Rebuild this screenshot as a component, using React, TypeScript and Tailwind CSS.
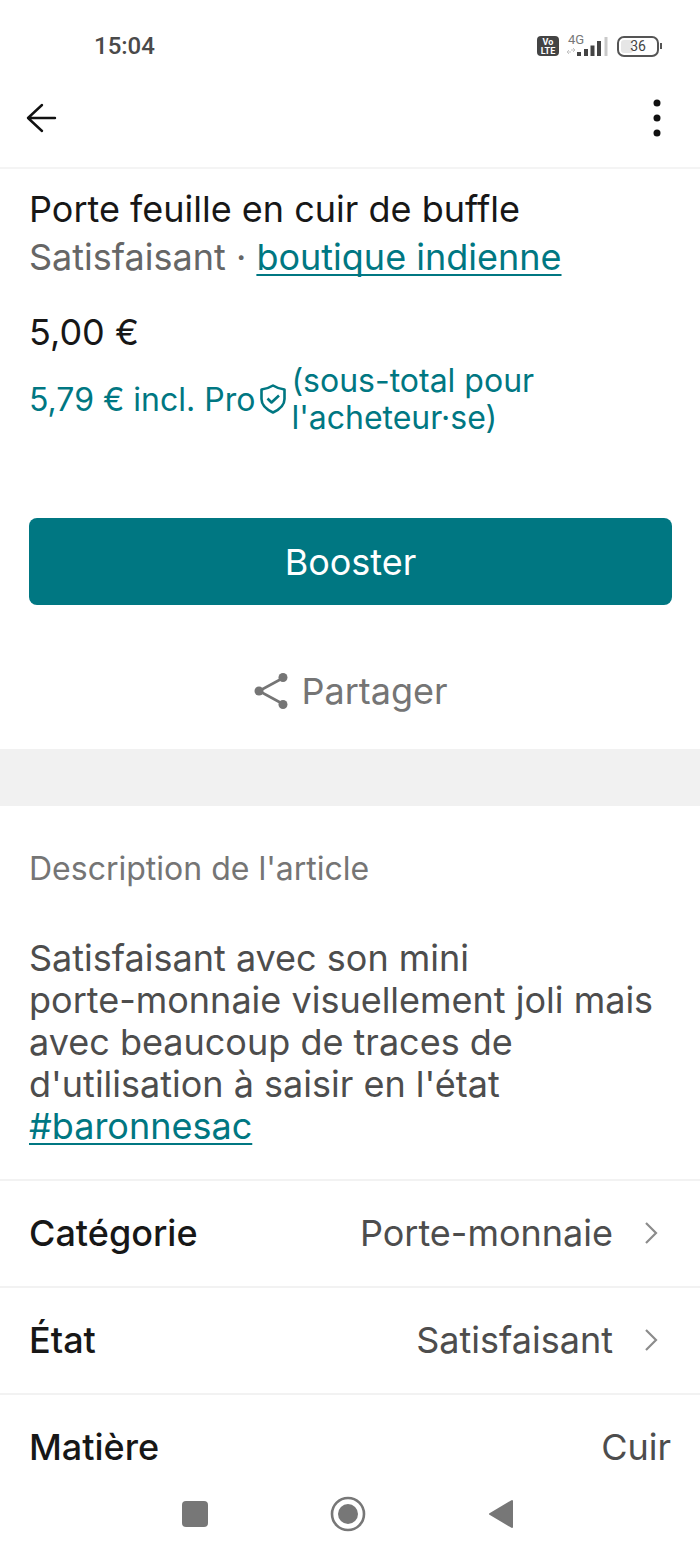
import type { ReactNode } from 'react'

type Detail = { label: string; value: string; href?: string }

const details: Detail[] = [
  { label: 'Catégorie', value: 'Porte-monnaie', href: '#categorie' },
  { label: 'État', value: 'Satisfaisant', href: '#etat' },
  { label: 'Matière', value: 'Cuir' },
]

function StatusBar() {
  return (
    <div className="flex h-[68px] items-center justify-between pt-6 pr-9 pl-[94px] text-[#4a4a4a]">
      <span className="font-[Roboto,sans-serif] text-2xl font-medium">15:04</span>
      <svg width="128" height="32" viewBox="0 0 128 32" fill="none" aria-hidden="true">
        {/* VoLTE badge */}
        <rect x="1" y="6" width="22" height="20" rx="4" fill="#444" />
        <text x="12" y="15" fontSize="9" fontWeight="700" fill="#fff" textAnchor="middle" fontFamily="Roboto, sans-serif">Vo</text>
        <text x="12" y="24" fontSize="9" fontWeight="700" fill="#fff" textAnchor="middle" fontFamily="Roboto, sans-serif">LTE</text>
        {/* signal */}
        <text x="32" y="14" fontSize="13" fill="#777" fontFamily="Roboto, sans-serif">4G</text>
        <path d="M31 22h4M33 20l-2 2 2 2M35 20h4M37 18l2 2-2 2" stroke="#c4c4c4" />
        <path d="M43 26v-4M50 26v-7M56.500 26V15.500M63 26V11" stroke="#444" strokeWidth="4" />
        <path d="M70 26V7" stroke="#c9c9c9" strokeWidth="3" />
        {/* battery */}
        <rect x="82" y="7" width="40" height="19" rx="6" stroke="#555" strokeWidth="2" />
        <rect x="85" y="10" width="12" height="13" rx="3" fill="#e6e6e6" />
        <path d="M125 13v6" stroke="#555" strokeWidth="2" />
        <text x="102" y="21" fontSize="14" fill="#444" textAnchor="middle" fontFamily="Roboto, sans-serif">36</text>
      </svg>
    </div>
  )
}

function Header() {
  return (
    <header className="flex h-[101px] items-center justify-between border-b-2 border-[#f4f4f4] px-6">
      <button type="button" aria-label="Retour">
        <svg width="36" height="36" viewBox="0 0 36 36" fill="none" stroke="#111" strokeWidth="2.4" strokeLinecap="round" strokeLinejoin="round">
          <path d="M31 18H4M18 5 4 18l14 13" />
        </svg>
      </button>
      <button type="button" aria-label="Plus d'options">
        <svg width="38" height="44" viewBox="0 0 38 44" fill="#111">
          <circle cx="19" cy="7" r="3.5" />
          <circle cx="19" cy="22" r="3.5" />
          <circle cx="19" cy="37" r="3.5" />
        </svg>
      </button>
    </header>
  )
}

function TextLink({ href, children }: { href: string; children: ReactNode }) {
  return (
    <a href={href} className="text-[#007782] underline decoration-2 underline-offset-4 [text-decoration-skip-ink:none]">
      {children}
    </a>
  )
}

function DetailRow({ label, value, href }: Detail) {
  const className = 'flex items-center justify-between border-t-2 border-[#f2f2f2] px-[29px] pt-[31px]'
  const name = <span className="font-medium text-[#171717]">{label}</span>

  if (!href) {
    return (
      <div className={className}>
        {name}
        <span>{value}</span>
      </div>
    )
  }

  return (
    <a href={href} className={`${className} pb-8`}>
      {name}
      <span className="flex items-center gap-7">
        {value}
        <svg width="30" height="24" viewBox="0 0 30 24" fill="none" stroke="#8c8c8c" strokeWidth="2.2" aria-hidden="true">
          <path d="m5 2 10 10L5 22" />
        </svg>
      </span>
    </a>
  )
}

function NavBar() {
  return (
    <nav className="grid h-[87px] grid-cols-3 place-items-center pt-1 pr-[122px] pl-[118px] text-[#777]">
      <button type="button" aria-label="Applications récentes">
        <svg width="36" height="36" viewBox="0 0 36 36" fill="currentColor">
          <rect x="5" y="5" width="26" height="26" rx="4" />
        </svg>
      </button>
      <button type="button" aria-label="Accueil">
        <svg width="36" height="36" viewBox="0 0 36 36" fill="currentColor">
          <circle cx="18" cy="18" r="16" fill="none" stroke="currentColor" strokeWidth="2.6" />
          <circle cx="18" cy="18" r="10" />
        </svg>
      </button>
      <button type="button" aria-label="Précédent">
        <svg width="36" height="36" viewBox="0 0 36 36" fill="currentColor" stroke="currentColor" strokeWidth="2" strokeLinejoin="round">
          <path d="M7 18 29 5v26z" />
        </svg>
      </button>
    </nav>
  )
}

export default function App() {
  return (
    <div className="bg-white font-[Inter,sans-serif] text-4xl leading-[42px] text-[#4d4d4d]">
      <StatusBar />
      <Header />

      <main className="leading-[42px]">
        <section className="pt-4 pr-7 pl-[29px]">
          <h1 className="leading-[48px] text-[#171717]">Porte feuille en cuir de buffle</h1>
          <p className="leading-[48px] text-[#666]">
            Satisfaisant · <TextLink href="#boutique-indienne">boutique indienne</TextLink>
          </p>
          <p className="mt-[30px] text-[#171717]">5,00 €</p>

          <div className="mt-[9px] flex items-center text-[32px] leading-[37px] text-[#007782]">
            <span>5,79 € incl. Pro</span>
            <svg className="mx-1 shrink-0" width="28" height="32" viewBox="0 0 28 32" fill="none" stroke="currentColor" strokeWidth="2.6" strokeLinejoin="round" aria-hidden="true">
              <path d="M14 2.500c3.500 2.200 7 3.600 11.500 4v9.500c0 6.500-5 10.500-11.500 13.500C7.500 26.500 2.500 22.500 2.500 16V6.500c4.500-.4 8-1.800 11.500-4z" />
              <path d="m8.500 15.500 4 4 7.500-7" />
            </svg>
            <span>
              (sous-total pour
              <br />
              l'acheteur·se)
            </span>
          </div>

          <button type="button" className="mt-[82px] flex h-[87px] w-full items-center justify-center rounded-lg bg-[#007782] text-white">
            Booster
          </button>
          <button type="button" className="flex w-full items-center justify-center gap-3 pt-[65px] pb-[37px] text-[#757575]">
            <svg width="36" height="38" viewBox="0 0 36 38" fill="currentColor" aria-hidden="true">
              <path d="M30 6 6 19l24 13" fill="none" stroke="currentColor" strokeWidth="2.6" />
              <circle cx="6" cy="19" r="4.500" />
              <circle cx="30" cy="5.500" r="4.500" />
              <circle cx="30" cy="32.500" r="4.500" />
            </svg>
            Partager
          </button>
        </section>

        <div className="h-[57px] bg-[#f1f1f1]" />

        <section className="px-[29px] pt-[42px] pb-8">
          <h2 className="text-[32px] leading-[42px] text-[#757575]">Description de l'article</h2>
          <p className="mt-[47px]">
            Satisfaisant avec son mini
            <br />
            porte-monnaie visuellement joli mais avec beaucoup de traces de
            <br />
            d'utilisation à saisir en l'état
            <br />
            <TextLink href="#baronnesac">#baronnesac</TextLink>
          </p>
        </section>

        {details.map((detail) => (
          <DetailRow key={detail.label} {...detail} />
        ))}
      </main>

      <NavBar />
    </div>
  )
}
